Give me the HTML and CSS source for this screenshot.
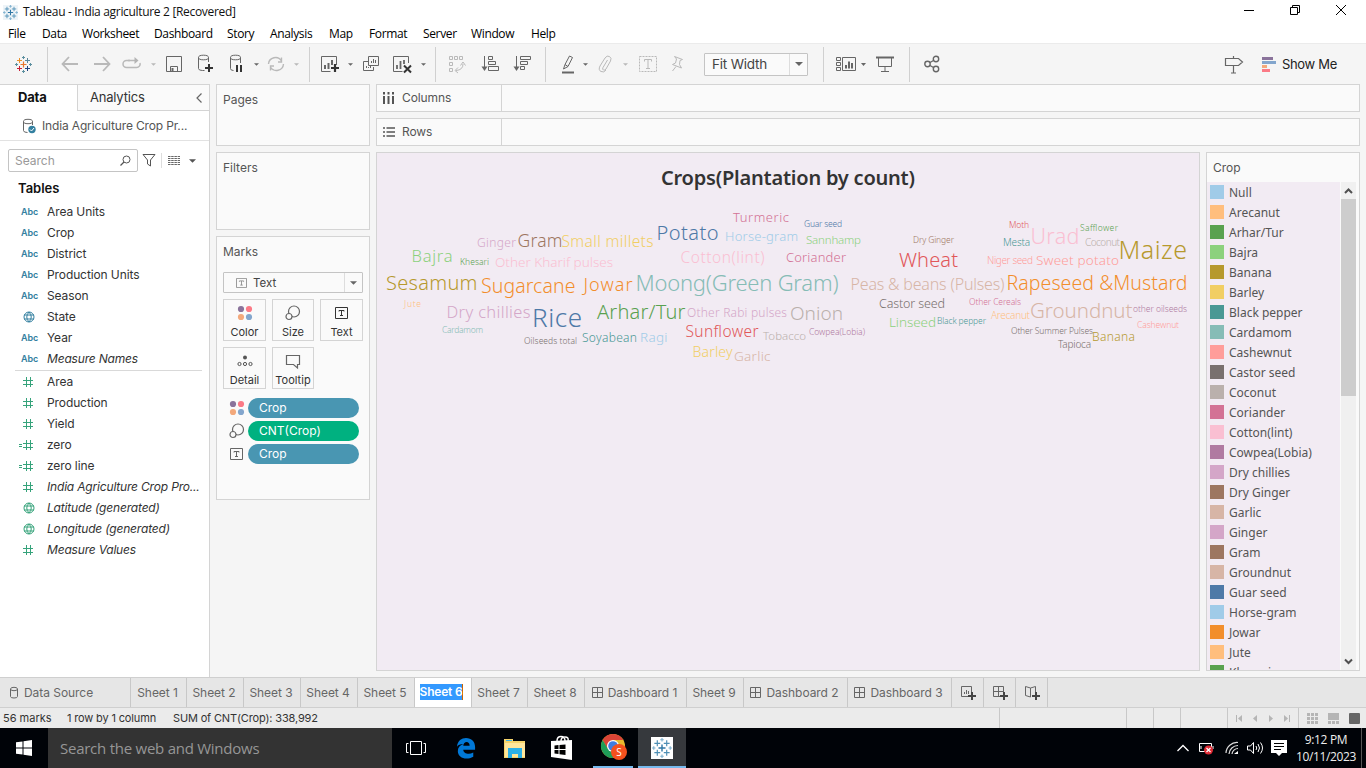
FILE: index.html
```html
<!DOCTYPE html>
<html lang="en">
<head>
<meta charset="utf-8">
<title>Tableau - India agriculture 2 [Recovered]</title>
<link rel="stylesheet" href="styles.css">
</head>
<body>
<svg class="defs" aria-hidden="true">
  <symbol id="hash" viewBox="0 0 10 10"><path d="M3.5 0v10M7.5 0v10M0 3.5h10M0 7.5h10" fill="none" stroke="currentColor"/></symbol>
  <symbol id="globe" viewBox="0 0 12 12"><circle cx="6" cy="6" r="5" fill="none" stroke="currentColor"/><path d="M1 4h10M1 8h10M6 1Q1.500 6 6 11M6 1Q10.500 6 6 11" fill="none" stroke="currentColor"/></symbol>
  <symbol id="caret" viewBox="0 0 8 4"><path d="M0 0h8L4 4z" fill="currentColor"/></symbol>
  <symbol id="dots" viewBox="0 0 16 16"><circle cx="4" cy="4" r="3.100" fill="#8a739b"/><circle cx="12" cy="4" r="3.100" fill="#fb7a86"/><circle cx="4" cy="12" r="3.100" fill="#f3a97c"/><circle cx="12" cy="12" r="3.100" fill="#83a6cd"/></symbol>
  <symbol id="size" viewBox="0 0 16 16"><circle cx="9" cy="6.500" r="5.500" fill="none" stroke="#666" stroke-width="1.200"/><circle cx="4" cy="11.500" r="3" fill="#fafafa" stroke="#666" stroke-width="1.200"/></symbol>
  <symbol id="textbox" viewBox="0 0 13 12"><path d="M.5.5h12v11H.5zM4 4.500V3.500h5v1M6.500 3.500v5M5 8.500h3" fill="none" stroke="currentColor"/></symbol>
  <symbol id="grid" viewBox="0 0 11 11"><path d="M.5.5h10v10H.5zM5.500 0v11M0 5.500h11" fill="none" stroke="#666"/></symbol>
  <symbol id="plus" viewBox="0 0 8 8"><path d="M4 0v8M0 4h8" stroke="#444" stroke-width="2"/></symbol>
  <symbol id="tableau" viewBox="0 0 17 17">
    <path d="M8.500 5.500v6M5.500 8.500h6" stroke="var(--c1)" stroke-width="1.200"/>
    <path d="M4.500 2v5M2 4.500h5" stroke="var(--c2)"/><path d="M12.500 2v5M10 4.500h5" stroke="var(--c3)"/>
    <path d="M4.500 10v5M2 12.500h5" stroke="var(--c4)"/><path d="M12.500 10v5M10 12.500h5" stroke="var(--c5)"/>
    <path d="M8.500 0v3M7 1.500h3M8.500 14v3M7 15.500h3M1.500 7v3M0 8.500h3M15.500 7v3M14 8.500h3" stroke="var(--c6)"/>
  </symbol>
</svg>

<header class="titlebar">
  <span class="app-icon"><svg width="15" height="15"><use href="#tableau"/></svg></span>
  <span class="app-title">Tableau - India agriculture 2 [Recovered]</span>
  <div class="win-buttons">
    <svg width="12" height="12"><path d="M1 6.500h10" stroke="#000"/></svg>
    <svg width="12" height="12"><path d="M1.500 3.500h7v7h-7zM3.500 3.500v-2h7v7h-2" fill="none" stroke="#000"/></svg>
    <svg width="12" height="12"><path d="M1 1l10 10M11 1L1 11" stroke="#000"/></svg>
  </div>
</header>
<nav class="menubar">
  <span class="m1">File</span><span class="m2">Data</span><span class="m3">Worksheet</span><span class="m4">Dashboard</span><span class="m5">Story</span><span class="m6">Analysis</span><span class="m7">Map</span><span class="m8">Format</span><span class="m9">Server</span><span class="m10">Window</span><span>Help</span>
</nav>

<div class="toolbar">
  <svg class="logo" width="17" height="17"><use href="#tableau"/></svg>
  <i class="sep"></i>
  <svg class="off" width="18" height="18"><path d="M17 9H2M8 2L1.500 9 8 16" stroke-width="1.800"/></svg>
  <svg class="off" width="18" height="18"><path d="M1 9h15M10 2l6.500 7L10 16" stroke-width="1.800"/></svg>
  <svg class="off" width="20" height="18"><path d="M8 5.500H4.500a3 3 0 0 0 0 7h10a3.500 3.500 0 0 0 3.500-4.500" stroke-width="1.500"/><path d="M6 5.500h7" stroke-width="1.500"/><path d="M12.500 2l4 3.500-4 3.500z" fill="#b4b4b4" stroke="none"/></svg>
  <svg class="car off" width="5" height="3"><use href="#caret"/></svg>
  <svg width="16" height="16"><path d="M.5.500h15v15H.5zM4.500 15.500v-5h7v5"/><path d="M6.500 12v3" stroke-width="2"/></svg>
  <svg width="18" height="20"><path d="M11.500 8V3.500M1.500 3.500v11q0 2 4 2h2"/><ellipse cx="6.500" cy="3.500" rx="5" ry="2.300"/><path d="M12 10v8M8 14h8" stroke="#333" stroke-width="2"/></svg>
  <svg width="18" height="20"><path d="M13.500 9V3.500M3.500 3.500v11q0 2 3 2"/><ellipse cx="8.500" cy="3.500" rx="5" ry="2.300"/><path d="M10 11v7M14 11v7" stroke="#333" stroke-width="2"/></svg>
  <svg class="car" width="5" height="3"><use href="#caret"/></svg>
  <svg class="off" width="18" height="16"><path d="M1.500 8a7 7 0 0 1 13-3M16.500 8a7 7 0 0 1-13 3M14.500 1.500V6H11M3.500 14.500V10H7" stroke-width="1.400"/></svg>
  <svg class="car off" width="5" height="3"><use href="#caret"/></svg>
  <i class="sep"></i>
  <svg width="20" height="18"><path d="M16.500 10V1.500h-15v15h9"/><path d="M5 10v4M8.500 8v6M12 5v5" stroke-width="2"/><path d="M15 9v8M11 13h8" stroke="#333" stroke-width="2.200"/></svg>
  <svg class="car" width="5" height="3"><use href="#caret"/></svg>
  <svg width="18" height="18"><path d="M6.500 1.500h10v9h-10zM6 6.500H1.500v9h10V12M9.500 8V6M11.500 8V4M13.500 8V5M4.500 13v-2M6.500 13v-1M8.500 13v-2"/></svg>
  <svg width="20" height="18"><path d="M16.500 8V1.500h-15v15h9"/><path d="M5 10v4M8.500 6v8M12 5v4" stroke-width="1.800"/><path d="M12 10.500l7 7M19 10.500l-7 7" stroke="#333" stroke-width="2"/></svg>
  <svg class="car" width="5" height="3"><use href="#caret"/></svg>
  <i class="sep"></i>
  <svg class="off" width="18" height="18"><path d="M1.500 1.500h3v3h-3zM6.500 1.500h3v3h-3zM11.500 1.500h3v3h-3zM1.500 7.500h3v3h-3zM1.500 13.500h3v3h-3zM15 9q0 6-7 6.500M12.500 10.500L15 7l2.500 3.500M10 12.500L7 15.500l3 2.500"/></svg>
  <svg width="18" height="18"><path d="M3.500 1v12M7.500 1.500h4v3h-4zM7.500 6.500h7v3h-7zM7.500 11.500h10v4h-10z"/><path d="M.5 11.500h6L3.500 16z" fill="#666" stroke="none"/></svg>
  <svg width="18" height="18"><path d="M3.500 1v12M7.500 1.500h10v3h-10zM7.500 6.500h7v3h-7zM7.500 11.500h4v3h-4z"/><path d="M.5 11.500h6L3.500 16z" fill="#666" stroke="none"/></svg>
  <i class="sep"></i>
  <svg width="14" height="20"><path d="M4 10.500L8.500 2 11.500 3.500 7 12.500zM4 10.500L2.500 15 7 12.500"/><path d="M1 18.500h12" stroke-width="2"/></svg>
  <svg class="car" width="5" height="3"><use href="#caret"/></svg>
  <svg class="off" width="14" height="18"><path d="M9.500 5L5 12.500q-1 2 .5 2.500t2.500-1L12.500 6q1.500-3-1-4.500T7 3L2 11q-2 4 1 5.500T8 15"/></svg>
  <svg class="car off" width="5" height="3"><use href="#caret"/></svg>
  <svg class="off" width="18" height="16"><path d="M.5.5h17v15H.5z" stroke-dasharray="2 1"/><path d="M5.500 5.500v-2h7v2M9 3.500v9M7 12.500h4"/></svg>
  <svg class="off" width="14" height="18"><path d="M4.500 1.500l8 3-2.500 1-.5 4 2 3.500-9-3.500 3-1.500L6.500 4zM6 11.500L2.500 16"/></svg>
  <div class="select fit"><span>Fit Width</span><b><svg width="8" height="4"><use href="#caret"/></svg></b></div>
  <i class="sep"></i>
  <svg width="32" height="16"><path d="M.5 1.500h4v3h-4zM.5 6.500h4v3h-4zM.5 11.500h4v3h-4zM6.500 1.500h13v13h-13z"/><path d="M10 9v3.500M13 5.500v7M16 7v5.500" stroke-width="2"/><path d="M25 7h5l-2.500 3z" fill="#666" stroke="none"/></svg>
  <svg width="18" height="18"><path d="M0 2.500h18M2.500 2.500v9h13v-9M9 11.500v5M5 16.500h8"/><path d="M0 2.500h18" stroke-width="2"/></svg>
  <i class="sep"></i>
  <svg width="16" height="18"><g stroke-width="1.400"><circle cx="12" cy="4" r="2.700"/><circle cx="3.500" cy="9" r="2.700"/><circle cx="12" cy="14" r="2.700"/><path d="M6 7.500l3.500-2M6 10.500l3.500 2"/></g></svg>
  <div class="toolbar-end">
    <svg width="20" height="20"><path d="M1.500 4.500h13l4 3.500-4 3.500h-13zM9.500 2v2M9.500 12v7M7 19h5" stroke-width="1.200"/></svg>
    <svg class="showme-icon" width="14" height="15"><g stroke="none"><path d="M0 0h11v3H0z" fill="#8a739b"/><path d="M0 4h14v3H0z" fill="#83a6cd"/><path d="M0 8h5v3H0z" fill="#f3a97c"/><path d="M0 12h8v3H0z" fill="#fb7a86"/></g></svg>
    <span>Show Me</span>
  </div>
</div>

<main class="workspace">
  <aside class="data-pane">
    <div class="pane-tabs"><b>Data</b><div><span>Analytics</span><svg width="6" height="10"><path d="M5.500 0.500L1 5l4.500 4.500" fill="none" stroke="#666" stroke-width="1.200"/></svg></div></div>
    <div class="source">
      <svg width="15" height="16"><path d="M10.500 7V3.500M1.500 3.500v9q0 2 4 2" fill="none" stroke="#666"/><ellipse cx="6" cy="3.500" rx="4.500" ry="2.200" fill="none" stroke="#666"/><circle cx="10" cy="11.500" r="3.700" fill="#3480a0"/><path d="M8 11.500l1.500 1.500 2.500-3" fill="none" stroke="#fff"/></svg>
      <span>India Agriculture Crop Pr...</span>
    </div>
    <div class="search-row">
      <div class="search"><span>Search</span><svg width="11" height="11"><circle cx="6.500" cy="4.500" r="3.500" fill="none" stroke="#555"/><path d="M4 7L.5 10.500" stroke="#555" stroke-width="1.300"/></svg></div>
      <svg class="funnel" width="14" height="13"><path d="M1 .5h12L8.500 6v6l-3-2V6z" fill="none" stroke="#555"/></svg>
      <i class="list"><svg width="12" height="11"><path d="M0 1.500h12M0 3.500h12M0 5.500h12M0 7.500h12M0 9.500h12" stroke="#666" stroke-dasharray="2.500 .7"/></svg></i>
      <svg class="listcar" width="7" height="4"><use href="#caret"/></svg>
    </div>
    <h2>Tables</h2>
    <ul class="fields dim">
      <li><i>Abc</i><span>Area Units</span></li>
      <li><i>Abc</i><span>Crop</span></li>
      <li><i>Abc</i><span>District</span></li>
      <li><i>Abc</i><span>Production Units</span></li>
      <li><i>Abc</i><span>Season</span></li>
      <li><i><svg width="12" height="12"><use href="#globe"/></svg></i><span>State</span></li>
      <li><i>Abc</i><span>Year</span></li>
      <li><i>Abc</i><em>Measure Names</em></li>
    </ul>
    <ul class="fields mea">
      <li><i><svg width="10" height="10"><use href="#hash"/></svg></i><span>Area</span></li>
      <li><i><svg width="10" height="10"><use href="#hash"/></svg></i><span>Production</span></li>
      <li><i><svg width="10" height="10"><use href="#hash"/></svg></i><span>Yield</span></li>
      <li><i class="calc"><svg width="14" height="10"><path d="M0 4.500h3M0 6.500h3" stroke="currentColor"/><use href="#hash" x="4" width="10" height="10"/></svg></i><span>zero</span></li>
      <li><i class="calc"><svg width="14" height="10"><path d="M0 4.500h3M0 6.500h3" stroke="currentColor"/><use href="#hash" x="4" width="10" height="10"/></svg></i><span>zero line</span></li>
      <li><i><svg width="10" height="10"><use href="#hash"/></svg></i><em>India Agriculture Crop Pro...</em></li>
      <li><i><svg width="12" height="12"><use href="#globe"/></svg></i><em>Latitude (generated)</em></li>
      <li><i><svg width="12" height="12"><use href="#globe"/></svg></i><em>Longitude (generated)</em></li>
      <li><i><svg width="10" height="10"><use href="#hash"/></svg></i><em>Measure Values</em></li>
    </ul>
  </aside>

  <section class="cards">
    <div class="card pages">Pages</div>
    <div class="card filters">Filters</div>
    <div class="card marks">
      <div class="marks-title">Marks</div>
      <div class="select mark-type"><svg width="11" height="10"><use href="#textbox"/></svg><span>Text</span><b><svg width="7" height="4"><use href="#caret"/></svg></b></div>
      <div class="mark-grid">
        <div><svg width="16" height="16"><use href="#dots"/></svg><span>Color</span></div>
        <div><svg width="16" height="16"><use href="#size"/></svg><span>Size</span></div>
        <div><svg class="tb" width="13" height="12"><use href="#textbox"/></svg><span>Text</span></div>
        <div><svg width="16" height="16"><circle cx="8" cy="4.500" r="2" fill="#555"/><g fill="none" stroke="#555"><circle cx="2.500" cy="11" r="1.600"/><circle cx="8" cy="11" r="1.600"/><circle cx="13.500" cy="11" r="1.600"/></g></svg><span>Detail</span></div>
        <div><svg width="16" height="16"><path d="M1.500 2.500h13v9h-2V15l-4-3.500h-7z" fill="none" stroke="#666" stroke-width="1.200"/></svg><span>Tooltip</span></div>
      </div>
      <div class="pill-row"><svg width="16" height="16"><use href="#dots"/></svg><span class="pill">Crop</span></div>
      <div class="pill-row"><svg width="16" height="16"><use href="#size"/></svg><span class="pill green">CNT(Crop)</span></div>
      <div class="pill-row"><svg width="13" height="12"><use href="#textbox"/></svg><span class="pill">Crop</span></div>
    </div>
  </section>

  <section class="sheet">
    <div class="shelf"><div><svg width="12" height="12"><path d="M1 4v8M5.500 4v8M10 4v8M1 0v2.500M5.500 0v2.500M10 0v2.500" stroke="#555" stroke-width="2"/></svg><span>Columns</span></div></div>
    <div class="shelf"><div><svg width="12" height="10"><path d="M0 1h2M0 5h2M0 9h2M3.500 1H12M3.500 5H12M3.500 9H12" stroke="#555" stroke-width="1.700"/></svg><span>Rows</span></div></div>
    <div class="view-row">
      <div class="view">
        <svg class="cloud" viewBox="377 153 822 517" width="822" height="517">
          <text class="title" x="661" y="185" textLength="254">Crops(Plantation by count)</text>
          <text x="733" y="222" textLength="56" font-size="13" fill="#d37295">Turmeric</text>
          <text x="804" y="227" textLength="38" font-size="8.500" fill="#4e79a7">Guar seed</text>
          <text x="656.500" y="240" textLength="62" font-size="20" fill="#4e79a7">Potato</text>
          <text x="725" y="241" textLength="73" font-size="13" fill="#a0cbe8">Horse-gram</text>
          <text x="806" y="244" textLength="55" font-size="11.500" fill="#8cd17d">Sannhamp</text>
          <text x="477" y="247" textLength="39" font-size="12" fill="#d4a6c8">Ginger</text>
          <text x="517.500" y="247" textLength="45" font-size="17.500" fill="#9d7660">Gram</text>
          <text x="561.500" y="247" textLength="92" font-size="15.500" fill="#f1ce63">Small millets</text>
          <text x="411.500" y="262" textLength="41" font-size="16.500" fill="#8cd17d">Bajra</text>
          <text x="460" y="265" textLength="29" font-size="8.500" fill="#59a14f">Khesari</text>
          <text x="495" y="267" textLength="118" font-size="13.500" fill="#fabfd2">Other Kharif pulses</text>
          <text x="680.500" y="263" textLength="84" font-size="15.500" fill="#fabfd2">Cotton(lint)</text>
          <text x="786" y="262" textLength="60" font-size="13" fill="#d37295">Coriander</text>
          <text x="913" y="243" textLength="41" font-size="8.500" fill="#9d7660">Dry Ginger</text>
          <text x="899" y="267" textLength="59" font-size="20" fill="#e15759">Wheat</text>
          <text x="1009" y="228" textLength="20" font-size="8.500" fill="#e15759">Moth</text>
          <text x="1003" y="246" textLength="27" font-size="10" fill="#499894">Mesta</text>
          <text x="1030.500" y="244" textLength="49" font-size="21.500" fill="#fabfd2">Urad</text>
          <text x="1080" y="231" textLength="38" font-size="8.500" fill="#59a14f">Safflower</text>
          <text x="1085" y="246" textLength="35" font-size="10" fill="#bab0ac">Coconut</text>
          <text x="1118.500" y="259" textLength="68.500" font-size="25" fill="#b6992d">Maize</text>
          <text x="987" y="264" textLength="46" font-size="10" fill="#ff9d9a">Niger seed</text>
          <text x="1036" y="265" textLength="83" font-size="13.500" fill="#ff9d9a">Sweet potato</text>
          <text x="386" y="290" textLength="91.500" font-size="20" fill="#b6992d">Sesamum</text>
          <text x="481" y="293" textLength="94.500" font-size="19.500" fill="#f28e2b">Sugarcane</text>
          <text x="583.500" y="291" textLength="49" font-size="18" fill="#f28e2b">Jowar</text>
          <text x="635.500" y="291" textLength="203" font-size="22" fill="#86bcb6">Moong(Green Gram)</text>
          <text x="850.500" y="290" textLength="154" font-size="16" fill="#d7b5a6">Peas &amp; beans (Pulses)</text>
          <text x="1006.500" y="290" textLength="181" font-size="19.500" fill="#f28e2b">Rapeseed &amp;Mustard</text>
          <text x="879" y="308" textLength="66" font-size="12.500" fill="#79706e">Castor seed</text>
          <text x="969" y="305" textLength="52" font-size="8.500" fill="#d37295">Other Cereals</text>
          <text x="1030" y="318" textLength="102.500" font-size="20.500" fill="#d7b5a6">Groundnut</text>
          <text x="1133" y="312" textLength="54" font-size="8.500" fill="#b07aa1">other oilseeds</text>
          <text x="991" y="319" textLength="39" font-size="10" fill="#ffbe7d">Arecanut</text>
          <text x="404" y="307" textLength="17" font-size="8.500" fill="#ffbe7d">Jute</text>
          <text x="446.500" y="318" textLength="84" font-size="16.500" fill="#d4a6c8">Dry chillies</text>
          <text x="532" y="327" textLength="50" font-size="26" fill="#4e79a7">Rice</text>
          <text x="597" y="319" textLength="88.500" font-size="20" fill="#59a14f">Arhar/Tur</text>
          <text x="687" y="317" textLength="100" font-size="12" fill="#d4a6c8">Other Rabi pulses</text>
          <text x="790" y="320" textLength="53" font-size="19" fill="#bab0ac">Onion</text>
          <text x="889" y="327" textLength="47" font-size="13.500" fill="#8cd17d">Linseed</text>
          <text x="937" y="324" textLength="49" font-size="8.500" fill="#499894">Black pepper</text>
          <text x="442" y="333" textLength="41" font-size="8.500" fill="#86bcb6">Cardamom</text>
          <text x="524" y="344" textLength="53" font-size="8.500" fill="#79706e">Oilseeds total</text>
          <text x="582" y="342" textLength="55" font-size="12" fill="#499894">Soyabean</text>
          <text x="640" y="342" textLength="27.500" font-size="13.500" fill="#a0cbe8">Ragi</text>
          <text x="685.500" y="337" textLength="73" font-size="15.500" fill="#e15759">Sunflower</text>
          <text x="763" y="340" textLength="43" font-size="11.500" fill="#bab0ac">Tobacco</text>
          <text x="809" y="335" textLength="56" font-size="8.500" fill="#b07aa1">Cowpea(Lobia)</text>
          <text x="692.500" y="357" textLength="40" font-size="14" fill="#f1ce63">Barley</text>
          <text x="734" y="361" textLength="36.500" font-size="13.500" fill="#d7b5a6">Garlic</text>
          <text x="1011" y="334" textLength="82" font-size="8.500" fill="#79706e">Other Summer Pulses</text>
          <text x="1092" y="341" textLength="43" font-size="12" fill="#b6992d">Banana</text>
          <text x="1058" y="348" textLength="33" font-size="10" fill="#79706e">Tapioca</text>
          <text x="1137" y="328" textLength="42" font-size="8.500" fill="#ff9d9a">Cashewnut</text>
        </svg>
      </div>
      <div class="legend">
        <div class="legend-title">Crop</div>
        <div class="legend-body">
          <ul>
            <li><i style="background:#a0cbe8"></i>Null</li>
            <li><i style="background:#ffbe7d"></i>Arecanut</li>
            <li><i style="background:#59a14f"></i>Arhar/Tur</li>
            <li><i style="background:#8cd17d"></i>Bajra</li>
            <li><i style="background:#b6992d"></i>Banana</li>
            <li><i style="background:#f1ce63"></i>Barley</li>
            <li><i style="background:#499894"></i>Black pepper</li>
            <li><i style="background:#86bcb6"></i>Cardamom</li>
            <li><i style="background:#ff9d9a"></i>Cashewnut</li>
            <li><i style="background:#79706e"></i>Castor seed</li>
            <li><i style="background:#bab0ac"></i>Coconut</li>
            <li><i style="background:#d37295"></i>Coriander</li>
            <li><i style="background:#fabfd2"></i>Cotton(lint)</li>
            <li><i style="background:#b07aa1"></i>Cowpea(Lobia)</li>
            <li><i style="background:#d4a6c8"></i>Dry chillies</li>
            <li><i style="background:#9d7660"></i>Dry Ginger</li>
            <li><i style="background:#d7b5a6"></i>Garlic</li>
            <li><i style="background:#d4a6c8"></i>Ginger</li>
            <li><i style="background:#9d7660"></i>Gram</li>
            <li><i style="background:#d7b5a6"></i>Groundnut</li>
            <li><i style="background:#4e79a7"></i>Guar seed</li>
            <li><i style="background:#a0cbe8"></i>Horse-gram</li>
            <li><i style="background:#f28e2b"></i>Jowar</li>
            <li><i style="background:#ffbe7d"></i>Jute</li>
            <li><i style="background:#59a14f"></i>Khesari</li>
          </ul>
          <div class="scrollbar">
            <svg width="15" height="17"><path d="M4 11l3.500-3.500L11 11" fill="none" stroke="#505050" stroke-width="2"/></svg>
            <div class="thumb"></div>
            <svg class="down" width="15" height="17"><path d="M4 6.500L7.500 10 11 6.500" fill="none" stroke="#505050" stroke-width="2"/></svg>
          </div>
        </div>
      </div>
    </div>
  </section>
</main>

<nav class="sheet-tabs">
  <div class="ds"><svg width="10" height="12"><path d="M1.500 2v7.500q0 1.500 3.500 1.500t3.500-1.500V2" fill="none" stroke="#666"/><ellipse cx="5" cy="2" rx="3.500" ry="1.700" fill="none" stroke="#666"/></svg><span>Data Source</span></div>
  <div class="t56">Sheet 1</div><div>Sheet 2</div><div>Sheet 3</div><div>Sheet 4</div><div>Sheet 5</div>
  <div class="active"><span>Sheet 6</span></div>
  <div class="t56">Sheet 7</div><div>Sheet 8</div>
  <div class="t102"><svg width="11" height="11"><use href="#grid"/></svg><span>Dashboard 1</span></div>
  <div>Sheet 9</div>
  <div class="t104"><svg width="11" height="11"><use href="#grid"/></svg><span>Dashboard 2</span></div>
  <div class="t104"><svg width="11" height="11"><use href="#grid"/></svg><span>Dashboard 3</span></div>
  <div class="t32"><svg width="16" height="16"><path d="M11.500 8V1.500H1.500v10H8M4.500 9V7M6.500 9V5M8.500 9V6" fill="none" stroke="#666"/><use href="#plus" x="8" y="7" width="8" height="8"/></svg></div>
  <div class="t32"><svg width="16" height="16"><path d="M11.500 8V1.500H1.500v10H8M6.500 1v11M1 6.500h11" fill="none" stroke="#666"/><use href="#plus" x="8" y="7" width="8" height="8"/></svg></div>
  <div class="t32"><svg width="16" height="16"><path d="M11.500 8V1.500L6.500 3 1.500 1.500v9l5 1.500M6.500 3v9" fill="none" stroke="#666"/><use href="#plus" x="8" y="7" width="8" height="8"/></svg></div>
</nav>

<footer class="status">
  <span class="s1">56 marks</span><span class="s2">1 row by 1 column</span><span class="s3">SUM of CNT(Crop): 338,992</span>
  <div class="cell c127"></div><div class="cell c27"></div><div class="cell c27"></div><div class="cell c47"></div>
  <div class="cell nav"><svg width="6" height="7"><path d="M.5 0v7" stroke="#b5b5b5"/><path d="M6 0v7L2 3.500z"/></svg><svg width="4" height="7"><path d="M4 0v7L0 3.500z"/></svg><svg width="4" height="7"><path d="M0 0v7l4-3.500z"/></svg><svg width="6" height="7"><path d="M5.500 0v7" stroke="#b5b5b5"/><path d="M0 0v7l4-3.500z"/></svg></div>
  <div class="cell modes"><svg width="11" height="11"><path d="M0 0h3v3H0zM4 0h3v3H4zM8 0h3v3H8zM0 4h3v3H0zM4 4h3v3H4zM8 4h3v3H8zM0 8h3v3H0zM4 8h3v3H4zM8 8h3v3H8z"/></svg><svg width="11" height="11"><path d="M0 0h11v7H0zM0 8h3v3H0zM4 8h3v3H4zM8 8h3v3H8z"/></svg><svg width="11" height="11"><rect width="11" height="11" rx="1" fill="#666"/></svg></div>
</footer>

<div class="taskbar">
  <div class="start"><svg width="16" height="16"><path d="M0 2.300L6.500 1.400V7.500H0zM7.500 1.200L16 0v7.500H7.500zM0 8.500h6.500v6.100L0 13.700zM7.500 8.500H16V16l-8.500-1.200z" fill="#fff"/></svg></div>
  <div class="task-search"><span>Search the web and Windows</span></div>
  <div class="task"><svg width="20" height="16"><path d="M4.500 1.500h11v13h-11zM2.500 3.500h-2v9h2M17.500 3.500h2v9h-2" fill="none" stroke="#fff"/></svg></div>
  <div class="task edge"><svg width="20" height="22" viewBox="0 0 22 24"><path d="M1 10.500C2 4 6 1 11 1c6 0 10 4 10 10v3H8c0 4 6 6 11 3v4.500C11 26 2 22.500 2 15.500c0-4 2-6.500 6-8-3.500.5-5.500 1-7 3zM8 9.500h7C15 3.500 8 4.500 8 9.500z" fill="#0078d7"/></svg></div>
  <div class="task"><svg width="22" height="20"><path d="M0 1h9v2h12v17H0z" fill="#f5d46b"/><path d="M2 2h6v1H2z" fill="#3db5e8"/><path d="M1 5h20v14H1z" fill="#ffe69b"/><path d="M4 10h14v10h-4v-4H8v4H4z" fill="#2cb1e8"/></svg></div>
  <div class="task"><svg width="22" height="26"><path d="M6 6Q6 1.500 10 1.500T14 6M10 6q0-4 4-4t3 4" fill="none" stroke="#fff" stroke-width="1.500"/><path d="M0 6l21-1v20L0 22z" fill="#fff"/><path d="M3.500 10.500l4-.5v4h-4zM8.500 10l6-.5V14h-6zM3.500 15h4v4l-4-.5zM8.500 15h6v5l-6-.8z" fill="#000"/></svg></div>
  <div class="task chrome"><svg width="28" height="28"><circle cx="13" cy="13" r="12" fill="#e8b92e"/><path d="M2.600 7A12 12 0 0 1 23.400 7H13L7.800 16z" fill="#db4437"/><path d="M2.600 7A12 12 0 0 0 13 25l5-9H8z" fill="#1e9c58"/><circle cx="13" cy="13" r="6" fill="#fff"/><circle cx="13" cy="13" r="4.800" fill="#3f7de0"/><circle cx="19" cy="19" r="8" fill="#f4511e"/><text x="19" y="23" text-anchor="middle" font-size="10" fill="#fff">S</text></svg></div>
  <div class="task tab"><span><svg width="20" height="20"><use href="#tableau"/></svg></span></div>
  <div class="tray">
    <svg width="14" height="8"><path d="M1.500 7L7 1.500 12.500 7" fill="none" stroke="#fff" stroke-width="1.300"/></svg>
    <svg class="bat" width="16" height="14"><path d="M1.500 2.500h12v8h-12zM3 5v3" fill="none" stroke="#fff"/><path d="M15 5v3" stroke="#fff"/><circle cx="10.500" cy="9" r="4.500" fill="#e02b35"/><path d="M8.500 7l4 4M12.500 7l-4 4" stroke="#fff" stroke-width="1.200"/></svg>
    <svg class="wifi" width="14" height="14"><path d="M1 12A11 11 0 0 1 13 1.500M4 13A9 9 0 0 1 13 4.500M7 13A6 6 0 0 1 13 7.500" fill="none" stroke="#ddd" stroke-width="1.200"/><path d="M9 13l4-3v3z" fill="#fff"/></svg>
    <svg class="snd" width="18" height="14"><path d="M1.500 5h3L7.500 1.500v11L4.500 9h-3z" fill="none" stroke="#fff"/><path d="M10 5q1.500 2 0 4M12 3q3 4 0 8M14.500 1.500q4 5.500 0 11" fill="none" stroke="#fff"/></svg>
    <svg class="msg" width="16" height="16"><path d="M0 0h16v13h-5l-3 3-3-3H0z" fill="#fff"/><path d="M3 3.500h10M3 6.500h10M3 9.500h7" stroke="#000"/></svg>
    <div class="clock"><span>9:12 PM</span><span>10/11/2023</span></div>
    <i></i>
  </div>
</div>
</body>
</html>
```
FILE: styles.css
```css
* { box-sizing: border-box; }
body { margin: 0; width: 1366px; height: 768px; overflow: hidden; display: flex; flex-direction: column; background: #f5f5f5; font: 12px/16px Inter, "Noto Sans", sans-serif; color: #333; white-space: nowrap; }
svg { display: block; flex: none; overflow: visible; }
ul, h2 { margin: 0; padding: 0; list-style: none; }
.defs { position: absolute; width: 0; height: 0; }
.app-icon, .tab { --c1: #2f77a5; --c2: #4e8fb5; --c3: #4e8fb5; --c4: #4e8fb5; --c5: #4e8fb5; --c6: #7fb2cf; }
.logo { --c1: #e8762d; --c2: #eb9129; --c3: #59879b; --c4: #c72037; --c5: #1f447e; --c6: #5b8f9f; }

.titlebar { height: 24px; background: #fff; display: flex; align-items: center; padding-left: 3px; font-family: "Open Sans", sans-serif; color: #111; }
.app-icon { width: 15px; height: 15px; background: #eef4f8; }
.app-title { margin-left: 5px; letter-spacing: -.32px; }
.win-buttons { margin-left: auto; display: flex; gap: 34px; padding: 0 19px 4px 0; }
.menubar { height: 19px; background: #fff; display: flex; padding: 2px 0 0 8px; font-family: "Open Sans", sans-serif; color: #000; letter-spacing: -.36px; }
.m1 { width: 34px; } .m2 { width: 40px; } .m3 { width: 72px; } .m4 { width: 73px; } .m5 { width: 43px; }
.m6 { width: 59px; } .m7 { width: 40px; } .m8 { width: 54px; } .m9 { width: 48px; } .m10 { width: 60px; }

.toolbar { height: 41px; border-top: 1px solid #ebebeb; display: grid; align-items: center; justify-items: center; grid-template-columns: 46px 2px 44px 20px 40px 2px 40px 24px 36px 4px 36px 4px 22px 20px 20px 22px 40px 2px 22px 22px 44px 20px 26px 20px 14px 26px 14px 32px 26px 132px 2px 56px 10px 38px 8px 1fr; }
.toolbar svg { fill: none; stroke: #666; color: #666; }
.toolbar .off { stroke: #b9b9b9; color: #b9b9b9; }
.toolbar .logo, .toolbar .car, .toolbar b svg { stroke: none; }
.sep { width: 1px; height: 35px; background: #d0d0d0; }
.select { display: flex; align-items: center; border: 1px solid #c4c4c4; border-radius: 1px; background: #fafafa; color: #444; }
.select b { margin-left: auto; align-self: stretch; display: flex; align-items: center; justify-content: center; border-left: 1px solid #ddd; color: #666; }
.fit { width: 104px; height: 23px; padding-left: 7px; font-size: 13.500px; letter-spacing: -.2px; }
.fit b { width: 18px; }
.toolbar-end { justify-self: end; display: flex; align-items: center; padding-right: 29px; font-size: 13px; color: #222; letter-spacing: -.3px; }
.showme-icon { margin: 0 6px 0 18px; }

.workspace { height: 593px; display: flex; gap: 6px; padding-right: 6px; }
.data-pane { width: 210px; border-right: 1px solid #d4d4d4; border-top: 1px solid #d4d4d4; background: #fff; }
.pane-tabs { height: 26px; display: flex; font-size: 13px; line-height: 25px; color: #333; }
.pane-tabs b { width: 77px; padding-left: 18px; color: #111; letter-spacing: -.2px; }
.pane-tabs div { flex: 1; display: flex; align-items: center; justify-content: space-between; padding: 0 7px 0 12px; background: #fafafa; border: solid #d4d4d4; border-width: 0 0 1px 1px; letter-spacing: -.2px; }
.source { height: 30px; display: flex; align-items: center; gap: 5px; padding-left: 22px; border-bottom: 1px solid #e2e2e2; color: #555; letter-spacing: -.15px; }
.search-row { display: flex; align-items: center; margin: 8px 0 0 8px; height: 23px; color: #555; }
.search { width: 130px; height: 23px; border: 1px solid #c4c4c4; border-radius: 2px; display: flex; align-items: center; justify-content: space-between; padding: 0 6px; color: #999; }
.funnel { margin-left: 4px; }
.list { margin-left: 5px; padding: 2px 0 2px 6px; border-left: 1px solid #ddd; }
.listcar { margin-left: 9px; }
h2 { font-size: 13px; line-height: 18px; margin: 7px 0 4px 18px; color: #111; font-weight: 600; }
.fields { letter-spacing: -.1px; }
.fields li { height: 21px; display: flex; align-items: center; }
.fields li > i { flex: none; width: 34px; margin-left: 13px; padding-left: 8px; font: 600 9px/12px Inter; }
.fields li > i svg { margin-left: 2px; }
.fields .calc svg { margin-left: -2px; }
.fields em { letter-spacing: -.18px; }
.dim i { color: #3480a0; } .mea i { color: #36a37b; }
.mea { border-top: 1px solid #d9d9d9; margin: 1px 7px 0 15px; }
.mea li { margin-left: -15px; }

.cards { width: 154px; display: flex; flex-direction: column; gap: 6px; }
.card { border: 1px solid #d4d4d4; background: #fafafa; padding: 7px 6px; color: #555; }
.pages { height: 62px; } .filters { height: 78px; }
.marks { height: 264px; }
.mark-type { height: 21px; margin: 12px 0 6px; padding-left: 12px; gap: 6px; font-size: 11.500px; }
.mark-type svg { color: #888; } .mark-type b { width: 18px; }
.mark-type b svg { color: #666; }
.mark-grid { display: grid; grid-template-columns: 43px 42px 43px; gap: 6px; margin-bottom: 9px; }
.mark-grid div { height: 42px; border: 1px solid #d4d4d4; display: flex; flex-direction: column; align-items: center; justify-content: space-between; padding: 5px 0 0; font-size: 11px; color: #333; }
.mark-grid .tb { margin-top: 2px; }
.pill-row { height: 20px; margin-bottom: 3px; display: grid; grid-template-columns: 25px 111px; align-items: center; }
.pill-row svg { justify-self: center; margin-left: 2px; color: #666; }
.pill { height: 20px; border-radius: 10px; background: #4996b2; color: #fff; line-height: 20px; padding-left: 11px; }
.green { background: #00b180; }

.sheet { flex: 1; display: flex; flex-direction: column; gap: 6px; }
.shelf { height: 28px; border: 1px solid #d4d4d4; background: #fafafa; }
.shelf div { width: 125px; height: 26px; border-right: 1px solid #d4d4d4; display: flex; align-items: center; gap: 7px; padding-left: 6px; color: #555; letter-spacing: -.1px; }
.view-row { display: flex; gap: 6px; height: 519px; }
.view { width: 824px; border: 1px solid #d4d4d4; background: #f2ebf3; }
.cloud { font-family: "Noto Sans", "Open Sans", sans-serif; font-weight: 300; }
.cloud .title { font-size: 20px; font-weight: 600; fill: #333; }
.legend { width: 154px; border: 1px solid #d4d4d4; background: #fafafa; overflow: hidden; }
.legend-title { height: 29px; padding: 7px 6px; color: #555; }
.legend-body { height: 488px; display: flex; gap: 1px; }
.legend ul { width: 133px; background: #f2ebf3; overflow: hidden; font-family: "Noto Sans", sans-serif; color: #555; }
.legend li { height: 20px; display: flex; align-items: center; gap: 5px; padding: 2px 0 0 3px; }
.legend i { width: 14px; height: 14px; margin-top: -2px; }
.scrollbar { width: 15px; background: #f0f0f0; display: flex; flex-direction: column; }
.thumb { height: 197px; background: #cdcdcd; }
.down { margin-top: auto; }

.sheet-tabs { height: 31px; background: #e6e6e6; border: solid #cfcfcf; border-width: 1px 0; display: flex; color: #666; letter-spacing: -.05px; }
.sheet-tabs > div { width: 57px; border-right: 1px solid #c8c8c8; display: flex; align-items: center; justify-content: center; gap: 5px; padding-right: 2px; }
.sheet-tabs .ds { width: 131px; justify-content: flex-start; padding-left: 9px; }
.sheet-tabs .t56 { width: 56px; } .sheet-tabs .t102 { width: 102px; } .sheet-tabs .t104 { width: 104px; } .sheet-tabs .t32 { width: 32px; padding: 0; }
.sheet-tabs .active { background: #fff; padding: 0 3px 2px 0; }
.active span { background: #3399ff; color: #fff; font-weight: 600; letter-spacing: -.2px; border-right: 1px solid #c60; }
.status { height: 20px; background: #ebebeb; display: flex; align-items: center; padding-left: 3px; font-size: 11px; color: #333; }
.s1 { width: 64px; } .s2 { width: 106px; letter-spacing: -.15px; } .s3 { flex: 1; letter-spacing: -.15px; }
.cell { height: 20px; border-left: 1px solid #c8c8c8; }
.cell svg { fill: #b5b5b5; }
.c127 { width: 127px; } .c27 { width: 27px; } .c47 { width: 47px; }
.nav { width: 71px; display: flex; align-items: center; justify-content: space-between; padding: 0 8px; }
.modes { width: 68px; display: flex; align-items: center; gap: 10px; padding-left: 8px; }

.taskbar { height: 40px; background: #000308; display: flex; font-family: "Open Sans", sans-serif; }
.start { width: 48px; display: flex; align-items: center; justify-content: center; }
.task-search { width: 344px; background: #333; color: #969696; font-size: 15px; line-height: 41px; padding-left: 12px; letter-spacing: -.25px; }
.task { width: 49px; display: flex; align-items: center; justify-content: center; }
.task:nth-child(3) { width: 48px; }
.task.edge { width: 52px; }
.task:nth-child(5) { width: 45px; }
.task.chrome { width: 40px; margin: 0 5px 0 7px; border-bottom: 2px solid #76b9ed; padding-left: 2px; }
.task.tab { width: 48px; background: #36393d; border-bottom: 2px solid #76b9ed; }
.tab span { background: #fff; padding: 1px; margin-top: 1px; }
.tray { margin-left: auto; display: flex; align-items: center; color: #eee; }
.bat { margin-left: 8px; } .wifi { margin-left: 11px; } .snd { margin-left: 7px; } .msg { margin-left: 7px; }
.clock { width: 74px; padding-left: 4px; display: flex; flex-direction: column; align-items: center; line-height: 17px; letter-spacing: -.35px; }
.tray > i { width: 1px; height: 40px; background: #555; margin-right: 4px; }
```
